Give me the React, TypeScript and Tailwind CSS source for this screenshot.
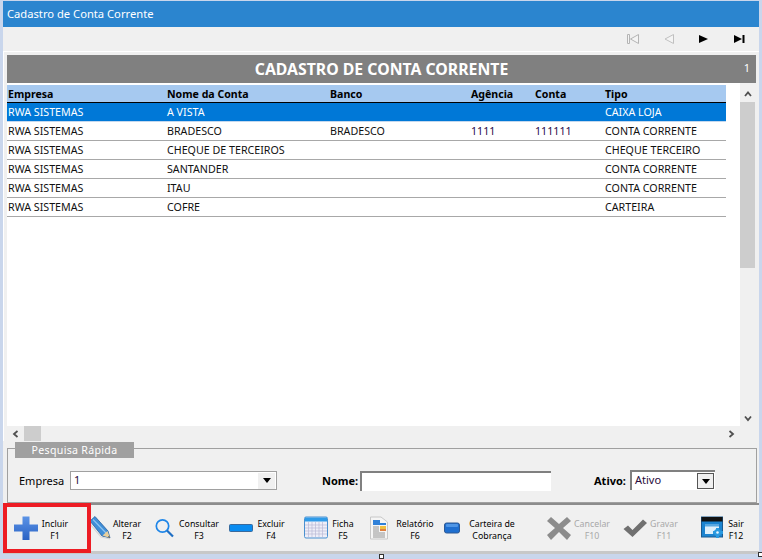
import * as React from "react";

const font = "font-['Noto_Sans','Open_Sans',sans-serif]";

const rows = [
  { empresa: "RWA SISTEMAS", nome: "A VISTA", banco: "", agencia: "", conta: "", tipo: "CAIXA LOJA" },
  { empresa: "RWA SISTEMAS", nome: "BRADESCO", banco: "BRADESCO", agencia: "1111", conta: "111111", tipo: "CONTA CORRENTE" },
  { empresa: "RWA SISTEMAS", nome: "CHEQUE DE TERCEIROS", banco: "", agencia: "", conta: "", tipo: "CHEQUE TERCEIRO" },
  { empresa: "RWA SISTEMAS", nome: "SANTANDER", banco: "", agencia: "", conta: "", tipo: "CONTA CORRENTE" },
  { empresa: "RWA SISTEMAS", nome: "ITAU", banco: "", agencia: "", conta: "", tipo: "CONTA CORRENTE" },
  { empresa: "RWA SISTEMAS", nome: "COFRE", banco: "", agencia: "", conta: "", tipo: "CARTEIRA" },
];

const cols = "grid grid-cols-[159px_163px_141px_64px_70px_1fr] pl-px";

function Chevron({ dir }: { dir: "up" | "down" | "left" | "right" }) {
  const d = {
    up: "M2 7 L5 3.5 L8 7",
    down: "M2 3.5 L5 7 L8 3.5",
    left: "M6.5 2 L3 5 L6.5 8",
    right: "M3.5 2 L7 5 L3.5 8",
  }[dir];
  return (
    <svg width="10" height="10" viewBox="0 0 10 10">
      <path d={d} fill="none" stroke="#505050" strokeWidth="1.8" />
    </svg>
  );
}

function NavIcons() {
  return (
    <div className="flex h-[24px] items-center justify-end bg-[#f0f0f0] pr-[14px]">
      <svg width="12" height="10" viewBox="0 0 12 10" className="mr-[25px]">
        <path d="M0.5 0.5 V9.5 H2.5 V0.5 Z M11.5 0.5 L3.5 5 L11.5 9.5 Z" fill="#f4f4f4" stroke="#b4b4b4" />
      </svg>
      <svg width="10" height="10" viewBox="0 0 10 10" className="mr-[25px]">
        <path d="M9.5 0.5 L1 5 L9.5 9.5 Z" fill="#f4f4f4" stroke="#c0c0c0" />
      </svg>
      <svg width="9" height="8" viewBox="0 0 9 8" className="mr-[26px]">
        <path d="M0 0 L9 4 L0 8 Z" fill="#000" />
      </svg>
      <svg width="11" height="8" viewBox="0 0 11 8">
        <path d="M0 0 L8 4 L0 8 Z" fill="#000" />
        <rect x="8.5" y="0" width="2" height="8" fill="#000" />
      </svg>
    </div>
  );
}

function Select({ value, className, boxed }: { value: string; className: string; boxed?: boolean }) {
  return (
    <div className={`flex items-center bg-white ${className}`}>
      <span className={`flex-1 pl-[3px] text-[11px] text-[#2a0a3a] ${boxed ? "-mt-[2px]" : ""}`}>{value}</span>
      <span className={`mr-px flex h-[16px] w-[17px] items-center justify-center bg-[#f0f0f0] ${boxed ? "border border-[#555]" : ""}`}>
        <svg width="8" height="5" viewBox="0 0 8 5"><path d="M0 0 H8 L4 5 Z" fill="#000" /></svg>
      </span>
    </div>
  );
}

const PlusIcon = (
  <svg width="24" height="24" viewBox="0 0 24 24">
    <defs>
      <linearGradient id="pl" x1="0" y1="0" x2="0" y2="1">
        <stop offset="0" stopColor="#5b93e6" />
        <stop offset="1" stopColor="#2a62c4" />
      </linearGradient>
    </defs>
    <path d="M8.5 0.5 H15.5 V8.5 H24 V15.5 H15.5 V24 H8.5 V15.5 H0 V8.5 H8.5 Z" fill="url(#pl)" />
  </svg>
);

const PencilIcon = (
  <svg width="24" height="24" viewBox="0 0 24 24">
    <path d="M2 5 L7 0.5 L20 15 L22 22 L14 20 Z" fill="#3f8fd8" stroke="#2a5f9e" strokeWidth="0.8" />
    <path d="M5 3.5 L18 17" stroke="#8fc4f0" strokeWidth="1.2" />
    <path d="M14.5 19.5 L19.5 15 L22 22 Z" fill="#e8cf9c" />
    <path d="M20 21 L21 20 L22 22 Z" fill="#333" />
    <path d="M2 8 L13 21 L22 23" fill="none" stroke="#d8d8d8" strokeWidth="1.2" />
  </svg>
);

const SearchIcon = (
  <svg width="24" height="24" viewBox="0 0 24 24">
    <circle cx="10.5" cy="10" r="6.2" fill="none" stroke="#1f86e8" strokeWidth="1.7" />
    <path d="M15 14.5 L21 20.5" stroke="#1f6fc4" strokeWidth="2.2" />
  </svg>
);

const MinusIcon = (
  <svg width="24" height="24" viewBox="0 0 24 24">
    <rect x="0.5" y="8.5" width="23" height="7" rx="1" fill="#0a8cf0" stroke="#3a6a9c" />
  </svg>
);

const CalendarIcon = (
  <svg width="24" height="24" viewBox="0 0 24 24">
    <rect x="0.5" y="1" width="23" height="21" rx="1.5" fill="#eeeef8" stroke="#4a90d0" />
    <rect x="1" y="1.5" width="22" height="4" fill="#2f9be8" />
    <path d="M4.5 6 V21 M8 6 V21 M11.5 6 V21 M15 6 V21 M18.5 6 V21 M1 9 H23 M1 12 H23 M1 15 H23 M1 18 H23" stroke="#b9b9d6" strokeWidth="0.7" />
  </svg>
);

const ReportIcon = (
  <svg width="24" height="24" viewBox="0 0 24 24">
    <path d="M3.5 1 H14 L20.5 6 V23 H3.5 Z" fill="#f5f5f5" stroke="#c8c8c8" />
    <rect x="6" y="4" width="7" height="5" fill="#2f80d8" />
    <rect x="13" y="7" width="6" height="2" fill="#2f80d8" />
    <rect x="13" y="10" width="6" height="3" fill="#f0c040" />
    <rect x="13" y="13" width="6" height="2" fill="#e08040" />
    <path d="M6 11 H12 M6 13 H12 M6 15 H12 M6 17 H18 M6 19 H18 M6 21 H18" stroke="#8a8a8a" strokeWidth="0.9" />
  </svg>
);

const WalletIcon = (
  <svg width="24" height="24" viewBox="0 0 24 24">
    <rect x="4.5" y="7" width="15" height="10" rx="2" fill="#1f6fd0" stroke="#2f5a94" />
    <rect x="6" y="8" width="12" height="3" rx="1" fill="#4f96e6" />
  </svg>
);

const CancelIcon = (
  <svg width="24" height="24" viewBox="0 0 24 24">
    <path d="M4 1 L12 8 L20 1 L24 5 L16 12 L24 19 L20 24 L12 16 L4 24 L0 19 L8 12 L0 5 Z" fill="#8c8c8c" />
  </svg>
);

const CheckIcon = (
  <svg width="24" height="24" viewBox="0 0 24 24">
    <path d="M0.5 13 L5 9.5 L9.5 14 L20 3.5 L24 7 L9.5 21 Z" fill="#707070" />
  </svg>
);

const ExitIcon = (
  <svg width="24" height="24" viewBox="0 0 24 24">
    <rect x="0.5" y="1" width="21" height="20" fill="#1c84d0" stroke="#1a5a90" />
    <rect x="0.5" y="1" width="21" height="4.5" fill="#111" />
    <rect x="4" y="8" width="14" height="10" fill="#dff0fb" />
    <rect x="4" y="8" width="14" height="2.5" fill="#5aa8e0" />
    <path d="M14 14 L19 19 M19 14 L14 19 M16.5 12 V22 M12 16.5 H22" stroke="#2a9ae0" strokeWidth="3" />
    <circle cx="16.5" cy="16.5" r="1.3" fill="#e8f4fc" />
  </svg>
);

const tools = [
  { label: "Incluir", sub: "F1", icon: PlusIcon, box: "", text: "w-[34px]" },
  { label: "Alterar", sub: "F2", icon: PencilIcon, box: "ml-[16px]", text: "w-[30px]" },
  { label: "Consultar", sub: "F3", icon: SearchIcon, box: "ml-[10px]", text: "w-[46px]" },
  { label: "Excluir", sub: "F4", icon: MinusIcon, box: "ml-[7px]", text: "w-[36px]" },
  { label: "Ficha", sub: "F5", icon: CalendarIcon, box: "ml-[15px]", text: "w-[30px]" },
  { label: "Relatório", sub: "F6", icon: ReportIcon, box: "ml-[9px]", text: "w-[48px]" },
  { label: "Carteira de", sub: "Cobrança", icon: WalletIcon, box: "ml-px", text: "w-[56px]" },
  { label: "Cancelar", sub: "F10", icon: CancelIcon, box: "ml-[27px]", text: "w-[42px] text-[#a8a8a8]" },
  { label: "Gravar", sub: "F11", icon: CheckIcon, box: "ml-[10px]", text: "w-[34px] text-[#a8a8a8]" },
  { label: "Sair", sub: "F12", icon: ExitIcon, box: "ml-[20px]", text: "w-[22px]" },
];

export default function App() {
  return (
    <div className={`relative flex h-[559px] w-[762px] flex-col overflow-hidden bg-[#c9d6ec] px-[3px] pt-px text-black ${font}`}>
      <div className="flex h-[26px] items-center bg-[#2b85cf] pl-[4px] text-[11.2px] text-white">Cadastro de Conta Corrente</div>
      <NavIcons />

      <div className="border-t border-l border-white bg-[#f0f0f0] pl-[3px] pr-[3px] pt-[3px]">
        <div className="relative flex h-[28px] items-center justify-center bg-[#808080] pt-[2px] text-[15.8px] font-bold text-white">
          CADASTRO DE CONTA CORRENTE
          <span className="absolute right-[6px] top-[5px] text-[11px] font-normal">1</span>
        </div>
        <div className="flex h-[343px] bg-white">
          <div className="w-[733px] pt-[2px]">
            <div className="mr-[14px] bg-white">
              <div className={`${cols} h-[18px] items-center border-b border-black bg-[#a6c9f0] pt-[2px] text-[10.6px] font-bold`}>
                <span>Empresa</span>
                <span>Nome da Conta</span>
                <span>Banco</span>
                <span>Agência</span>
                <span>Conta</span>
                <span>Tipo</span>
              </div>
              {rows.map((r, i) => (
                <div
                  key={i}
                  className={`${cols} h-[19px] items-center border-b text-[10.7px] ${i === 0 ? "border-[#c4d8ee] bg-[#0078d7] text-white" : "border-[#a8a8a8] text-[#111]"}`}
                >
                  <span>{r.empresa}</span>
                  <span>{r.nome}</span>
                  <span>{r.banco}</span>
                  <span className="text-[#2a0a4a]">{r.agencia}</span>
                  <span className="text-[#2a0a4a]">{r.conta}</span>
                  <span>{r.tipo}</span>
                </div>
              ))}
            </div>
          </div>
          <div className="flex w-[15px] flex-col bg-[#f0f0f0] pt-[2px]">
            <div className="flex h-[17px] items-center justify-center"><Chevron dir="up" /></div>
            <div className="h-[166px] bg-[#cdcdcd]" />
            <div className="flex-1" />
            <div className="flex h-[17px] items-center justify-center"><Chevron dir="down" /></div>
          </div>
          <div className="w-px bg-[#f0f0f0]" />
        </div>
        <div className="flex h-[15px] items-center">
          <div className="flex w-[17px] justify-center"><Chevron dir="left" /></div>
          <div className="h-[15px] w-[17px] bg-[#cdcdcd]" />
          <div className="flex-1" />
          <div className="mr-[17px] flex w-[17px] justify-center"><Chevron dir="right" /></div>
        </div>
      </div>

      <div className="bg-[#f0f0f0] pl-[4px] pr-[2px] pt-[7px]">
        <div className="relative flex h-[55px] items-center border border-[#a0a0a0] pt-[11px] text-[11px]">
          <span className="absolute left-[7px] top-[-7px] flex h-[16px] w-[119px] items-center justify-center bg-[#a0a0a0] pt-[2px] text-[10.6px] tracking-[0.3px] text-white">
            Pesquisa Rápida
          </span>
          <span className="ml-[11px] w-[51px]">Empresa</span>
          <Select value="1" className="-mt-[1px] h-[19px] w-[207px] border border-[#a0a0a0]" />
          <span className="ml-[45px] w-[38px] font-bold">Nome:</span>
          <div className="-mt-[1px] h-[20px] w-[191px] border-t-2 border-l-2 border-[#808080] bg-white" />
          <span className="ml-[43px] w-[36px] font-bold">Ativo:</span>
          <Select value="Ativo" boxed className="-mt-[2px] h-[20px] w-[85px] border-t-2 border-l-2 border-[#808080]" />
        </div>
      </div>

      <div className="flex h-[48px] items-center border-t-2 border-[#8c8c8c] bg-[#f0f0f0] pl-[11px] text-[8.8px] leading-[12px]">
        {tools.map((t) => (
          <React.Fragment key={t.label}>
            <div className={`flex h-[24px] w-[24px] items-center justify-center ${t.box}`}>{t.icon}</div>
            <div className={`mt-[3px] text-center whitespace-nowrap ${t.text}`}>
              <div>{t.label}</div>
              <div>{t.sub}</div>
            </div>
          </React.Fragment>
        ))}
      </div>
      <div className="h-[3px] bg-[#c8c8c8]" />

      <div className="absolute left-[3px] top-[503px] h-[50px] w-[88px] border-[4px] border-[#ed1c24]" />
      <div className="absolute left-[379px] top-[554px] h-[5px] w-[5px] border border-[#333] bg-white" />
      <div className="absolute left-[758px] top-[552px] h-[5px] w-[5px] border border-[#333] bg-white" />
    </div>
  );
}
